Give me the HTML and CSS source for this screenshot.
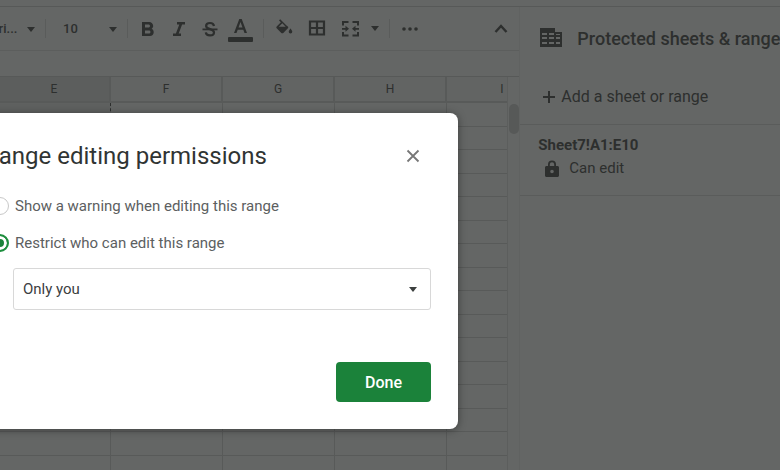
FILE: index.html
```
<!DOCTYPE html>
<html lang="en">
<head>
    <meta charset="utf-8">
    <title>Range editing permissions</title>
    <link rel="stylesheet" href="styles.css">
</head>
<body>
    <div class="topbar"></div>
    <div class="workspace">
        <main class="editor">
            <div class="toolbar">
                <label class="picker font-picker">
                    <select aria-label="Font"><option>Ari...</option></select>
                </label>
                <span class="separator"></span>
                <label class="picker size-picker">
                    <select aria-label="Font size"><option>10</option></select>
                </label>
                <span class="separator"></span>
                <div class="tools text-tools">
                    <button type="button" aria-label="Bold">
                        <svg width="24" height="24" viewBox="0 0 24 24"><path d="M15.600 11.800c1-.7 1.600-1.800 1.600-2.800 0-2.300-1.800-4-4-4H6v14h8c2.100 0 3.700-1.700 3.700-3.800 0-1.500-.9-2.800-2.100-3.400zM9 7.500h3.500c.8 0 1.500.7 1.500 1.500s-.7 1.500-1.500 1.500H9v-3zm4 9H9v-3h4c.8 0 1.500.7 1.500 1.500s-.7 1.500-1.500 1.500z"/></svg>
                    </button>
                    <button type="button" aria-label="Italic">
                        <svg width="24" height="24" viewBox="0 0 24 24"><path d="M10 5v2.500h2.300l-3.400 9H6V19h8v-2.500h-2.300l3.400-9H18V5z"/></svg>
                    </button>
                    <button type="button" aria-label="Strikethrough">
                        <svg width="24" height="24" viewBox="0 0 24 24"><path d="M4.500 11.500h15v1.800h-15z"/><path d="M16 9C15.700 7 14.200 6 12 6c-2.300 0-3.900 1.100-3.900 2.900 0 3.700 7.900 2.800 7.900 6.500 0 2-1.800 3-4 3-2.400 0-4-1.100-4.200-3.100" fill="none" stroke="currentColor" stroke-width="2.200"/></svg>
                    </button>
                    <button type="button" aria-label="Text color">
                        <svg width="25" height="28" viewBox="0 0 25 28"><path d="M11.300 4L6 18h2.500l1.200-3.300h5.600l1.200 3.300H19L13.700 4h-2.400zm-.8 8.600l2-5.600 2 5.600z"/><rect x="0" y="22" width="25" height="5" rx="1"/></svg>
                    </button>
                </div>
                <span class="separator"></span>
                <div class="tools cell-tools">
                    <button type="button" aria-label="Fill color">
                        <svg width="24" height="24" viewBox="0 0 24 24"><path d="M14.500 8.500L8.200 2.200 7 3.400l1.900 1.900-4.200 4.100c-.5.6-.5 1.400 0 1.900l4.600 4.600c.3.300.6.400 1 .4s.7-.1 1-.4l4.600-4.600c.5-.5.5-1.300-.1-1.900zM6.800 9.700l3.500-3.400 3.400 3.400zM18.500 11.500s-1.800 2.100-1.800 3.300a1.800 1.800 0 0 0 3.600 0c0-1.200-1.800-3.300-1.800-3.300z"/></svg>
                    </button>
                    <button type="button" aria-label="Borders">
                        <svg width="24" height="24" viewBox="0 0 24 24"><path d="M5 4.500h14v13H5zM12 4.500v13M5 11h14" fill="none" stroke="currentColor" stroke-width="2.200"/></svg>
                    </button>
                    <button type="button" aria-label="Merge cells">
                        <svg width="24" height="24" viewBox="0 0 24 24"><path d="M5 8.500V5h5.500M14.500 5H20v3.500M20 15v3.500h-5.500M10.500 18.500H5V15" fill="none" stroke="currentColor" stroke-width="2"/><path d="M4 11h3.500V8.800l3.500 3-3.500 3V12.700H4zM21 11h-3.500V8.800l-3.500 3 3.500 3V12.700H21z"/></svg>
                    </button>
                </div>
                <button type="button" class="more-merge" aria-label="Select merge type">
                    <svg width="8" height="5" viewBox="0 0 8 5"><path d="M0 0h8L4 5z"/></svg>
                </button>
                <span class="separator"></span>
                <button type="button" class="more" aria-label="More">
                    <svg width="16" height="4" viewBox="0 0 16 4"><circle cx="2" cy="2" r="1.800"/><circle cx="8" cy="2" r="1.800"/><circle cx="14" cy="2" r="1.800"/></svg>
                </button>
                <button type="button" class="collapse" aria-label="Hide the menus">
                    <svg width="14" height="10" viewBox="0 0 14 10"><path d="M1.500 8L7 2l5.500 6" fill="none" stroke="currentColor" stroke-width="2.400"/></svg>
                </button>
            </div>
            <div class="formula-bar"></div>
            <div class="grid-area">
                <div class="grid-scroll">
                    <table class="grid">
                        <thead>
                            <tr><th class="selected">E</th><th>F</th><th>G</th><th>H</th><th>I</th></tr>
                        </thead>
                        <tbody>
                            <tr><td class="selected"></td><td></td><td></td><td></td><td></td></tr>
                            <tr><td class="selected"></td><td></td><td></td><td></td><td></td></tr>
                            <tr><td class="selected"></td><td></td><td></td><td></td><td></td></tr>
                            <tr><td class="selected"></td><td></td><td></td><td></td><td></td></tr>
                            <tr><td class="selected"></td><td></td><td></td><td></td><td></td></tr>
                            <tr><td class="selected"></td><td></td><td></td><td></td><td></td></tr>
                            <tr><td class="selected"></td><td></td><td></td><td></td><td></td></tr>
                            <tr><td class="selected"></td><td></td><td></td><td></td><td></td></tr>
                            <tr><td class="selected"></td><td></td><td></td><td></td><td></td></tr>
                            <tr><td class="selected"></td><td></td><td></td><td></td><td></td></tr>
                            <tr><td></td><td></td><td></td><td></td><td></td></tr>
                            <tr><td></td><td></td><td></td><td></td><td></td></tr>
                            <tr><td></td><td></td><td></td><td></td><td></td></tr>
                            <tr><td></td><td></td><td></td><td></td><td></td></tr>
                            <tr><td></td><td></td><td></td><td></td><td></td></tr>
                            <tr><td></td><td></td><td></td><td></td><td></td></tr>
                        </tbody>
                    </table>
                </div>
                <div class="scrollbar"><div class="thumb"></div></div>
            </div>
        </main>
        <aside class="sidebar">
            <header class="sidebar-header">
                <svg width="24" height="20" viewBox="0 0 24 20"><path d="M1 0h15v4h7v15H1z"/><path class="gaps" d="M3 5h5v2H3zM10 5h5v2h-5zM17 6h4v1h-4zM3 9h5v2H3zM10 9h5v2h-5zM17 9h4v2h-4zM3 14h5v2H3zM10 14h5v2h-5zM17 14h4v2h-4z"/></svg>
                <h2>Protected sheets &amp; ranges</h2>
            </header>
            <button type="button" class="add-range">
                <svg width="12" height="12" viewBox="0 0 12 12"><path d="M6 0v12M0 6h12" stroke="currentColor" stroke-width="2"/></svg>
                Add a sheet or range
            </button>
            <div class="range-item">
                <strong>Sheet7!A1:E10</strong>
                <div class="range-access">
                    <svg width="14" height="17" viewBox="0 0 14 17"><path d="M12.500 6H11V4.500a4 4 0 0 0-8 0V6H1.500C.7 6 0 6.700 0 7.500v8c0 .8.7 1.500 1.500 1.500h11c.8 0 1.500-.7 1.500-1.500v-8c0-.8-.7-1.500-1.500-1.500zM7 13.300a1.800 1.800 0 1 1 0-3.600 1.800 1.800 0 0 1 0 3.600zM9.200 6H4.800V4.500a2.200 2.200 0 0 1 4.400 0z"/></svg>
                    <span>Can edit</span>
                </div>
            </div>
        </aside>
    </div>

    <form class="dialog" role="dialog" aria-labelledby="dialog-title">
        <div class="dialog-header">
            <h1 id="dialog-title">Range editing permissions</h1>
            <button type="button" class="close" aria-label="Close">
                <svg width="14" height="14" viewBox="0 0 14 14"><path d="M1.500 1.500l11 11M12.500 1.500l-11 11" stroke="currentColor" stroke-width="1.800"/></svg>
            </button>
        </div>
        <label class="choice">
            <input type="radio" name="permission" value="warning">
            Show a warning when editing this range
        </label>
        <label class="choice">
            <input type="radio" name="permission" value="restrict" checked>
            Restrict who can edit this range
        </label>
        <label class="picker editors">
            <select aria-label="Who can edit"><option>Only you</option></select>
        </label>
        <div class="actions">
            <button type="button" class="done">Done</button>
        </div>
    </form>
</body>
</html>
```
FILE: styles.css
```
* {
    box-sizing: border-box;
}
body {
    margin: 0;
    height: 100vh;
    overflow: hidden;
    display: flex;
    flex-direction: column;
    font-family: Roboto, sans-serif;
    font-size: 15px;
    background-color: #646665;
    color: #2d2f2e;
}
button, select {
    font: inherit;
    color: inherit;
    background: none;
    border: none;
    padding: 0;
    margin: 0;
}
button {
    display: flex;
    align-items: center;
    justify-content: center;
    cursor: pointer;
}
svg {
    fill: currentColor;
    flex: none;
}
h1, h2 {
    margin: 0;
    white-space: nowrap;
}
.topbar {
    flex: none;
    height: 7px;
    border-bottom: 1px solid #575958;
}
.workspace {
    flex: 1;
    min-height: 0;
    display: flex;
}
.editor {
    flex: 2;
    min-width: 0;
    display: flex;
    flex-direction: column;
}

/* drop-downs */
.picker {
    position: relative;
    display: block;
}
.picker select {
    appearance: none;
    width: 100%;
    height: 100%;
}
.picker::after {
    content: "";
    position: absolute;
    right: 10px;
    top: 50%;
    margin-top: -2px;
    border: 4px solid transparent;
    border-top: 5px solid currentColor;
    border-bottom: none;
    pointer-events: none;
}

/* toolbar */
.toolbar {
    flex: none;
    display: flex;
    align-items: center;
    height: 44px;
    border-bottom: 1px solid #5c5e5d;
    font-size: 13px;
    font-weight: 500;
}
.font-picker {
    width: 55px;
    margin-left: -10px;
}
.size-picker {
    width: 81px;
}
.size-picker select {
    padding-left: 17px;
}
.separator {
    width: 1px;
    height: 19px;
    background-color: #5a5c5b;
}
.tools {
    display: flex;
}
.tools button {
    height: 32px;
}
.text-tools {
    margin: 0 7px 0 4px;
}
.text-tools button {
    width: 31px;
}
.cell-tools {
    margin-left: 3px;
}
.cell-tools button {
    width: 33px;
}
.more-merge {
    width: 18px;
    height: 32px;
    margin-right: 5px;
}
.more, .collapse {
    width: 33px;
    height: 32px;
}
.more {
    margin-left: 3px;
}
.collapse {
    margin-left: auto;
    margin-right: 2px;
}
.formula-bar {
    flex: none;
    height: 26px;
    border-bottom: 1px solid #575958;
}

/* spreadsheet */
.grid-area {
    flex: 1;
    min-height: 0;
    display: flex;
}
.grid-scroll {
    flex: 1;
    overflow: hidden;
    border-right: 1px solid #5c5e5d;
}
.grid {
    width: 560px;
    margin-left: -1px;
    table-layout: fixed;
    border-collapse: separate;
    border-spacing: 0;
}
.grid th {
    height: 26px;
    padding: 0;
    border-right: 2px solid #585a59;
    border-bottom: 2px solid #585a59;
    background-color: #626463;
    font-size: 12px;
    font-weight: 400;
}
.grid th.selected {
    background-color: #5c5e5d;
}
.grid td {
    height: 24px;
    padding: 0;
    border-right: 1px solid #585a59;
    border-bottom: 1px solid #585a59;
}
.grid tr:nth-child(even) td {
    height: 23px;
}
.grid td.selected {
    background-color: #5f6160;
    border-right: 1px dashed #2d2f2e;
}
.scrollbar {
    width: 11px;
    padding: 27px 0 0 1px;
}
.thumb {
    height: 30px;
    border-radius: 5px;
    background-color: #575958;
}

/* protected ranges */
.sidebar {
    flex: 1;
    min-width: 0;
    overflow: hidden;
    border-left: 1px solid #606261;
}
.sidebar-header {
    display: flex;
    align-items: center;
    gap: 14px;
    height: 62px;
    padding-left: 19px;
}
.sidebar-header .gaps {
    fill: #646665;
}
.sidebar-header h2 {
    font-size: 18px;
    font-weight: 500;
}
.add-range {
    justify-content: flex-start;
    gap: 6px;
    width: 100%;
    height: 56px;
    padding-left: 23px;
    border-bottom: 1px solid #5a5c5b;
    font-size: 16px;
}
.range-item {
    height: 71px;
    padding: 10px 0 0 18px;
    border-bottom: 1px solid #5a5c5b;
    line-height: 20px;
}
.range-access {
    display: flex;
    align-items: center;
    gap: 10px;
    padding: 3px 0 0 7px;
}

/* dialog */
.dialog {
    position: absolute;
    top: 113px;
    left: -44px;
    width: 502px;
    padding: 28px 27px 27px 28px;
    border-radius: 8px;
    background-color: #fff;
    box-shadow: 0 1px 8px rgba(0, 0, 0, 0.4);
    color: #5c605f;
}
.dialog-header {
    display: flex;
    align-items: center;
    justify-content: space-between;
    height: 30px;
    margin-bottom: 23px;
}
.dialog-header h1 {
    font-size: 24px;
    font-weight: 400;
    color: #303433;
}
.close {
    width: 36px;
    height: 36px;
    color: #777;
}
.choice {
    display: flex;
    align-items: center;
    gap: 6px;
    height: 24px;
    margin: 0 0 13px 7px;
}
.choice input {
    appearance: none;
    width: 18px;
    height: 18px;
    margin: 0;
    border: 1px solid #c8c8c8;
    border-radius: 50%;
}
.choice input:checked {
    border: 2px solid #1e8e3e;
    background-color: #1b823a;
    box-shadow: inset 0 0 0 3px #fff;
}
.editors {
    height: 42px;
    margin: 0 0 0 29px;
    border: 1px solid #d8d8d8;
    border-radius: 3px;
    color: #3c403f;
}
.editors select {
    padding-left: 9px;
}
.editors::after {
    right: 13px;
}
.actions {
    display: flex;
    justify-content: flex-end;
    margin-top: 52px;
}
.done {
    width: 95px;
    height: 40px;
    border-radius: 4px;
    background-color: #1b823a;
    color: #fff;
    font-size: 16px;
    font-weight: 500;
}
```
